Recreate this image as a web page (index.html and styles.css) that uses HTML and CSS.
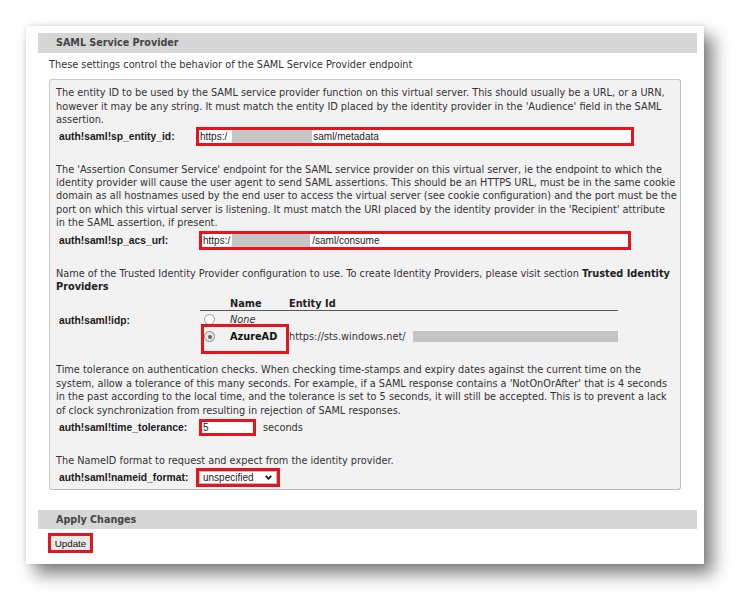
FILE: index.html
```html
<!DOCTYPE html>
<html>
<head>
<meta charset="utf-8">
<title>SAML Service Provider</title>
<link rel="stylesheet" href="styles.css">
</head>
<body>
<div class="page">
  <div class="card">
    <div class="bar">SAML Service Provider</div>
    <p class="intro">These settings control the behavior of the SAML Service Provider endpoint</p>
    <div class="box">
      <p class="desc">The entity ID to be used by the SAML service provider function on this virtual server. This should usually be a URL, or a URN,<br>however it may be any string. It must match the entity ID placed by the identity provider in the 'Audience' field in the SAML<br>assertion.</p>
      <div class="field f-entity">
        <label class="lbl">auth!saml!sp_entity_id:</label>
        <div class="inp inp-entity"><span>https:/</span><span class="redact redact-entity"></span><span>saml/metadata</span></div>
      </div>

      <p class="desc gap">The 'Assertion Consumer Service' endpoint for the SAML service provider on this virtual server, ie the endpoint to which the<br>identity provider will cause the user agent to send SAML assertions. This should be an HTTPS URL, must be in the same cookie<br>domain as all hostnames used by the end user to access the virtual server (see cookie configuration) and the port must be the<br>port on which this virtual server is listening. It must match the URI placed by the identity provider in the 'Recipient' attribute<br>in the SAML assertion, if present.</p>
      <div class="field f-acs">
        <label class="lbl">auth!saml!sp_acs_url:</label>
        <div class="inp inp-acs"><span>https:/</span><span class="redact redact-acs"></span><span>/saml/consume</span></div>
      </div>

      <p class="desc gap">Name of the Trusted Identity Provider configuration to use. To create Identity Providers, please visit section <b>Trusted Identity</b><br><b>Providers</b></p>
      <div class="field f-idp">
        <label class="lbl">auth!saml!idp:</label>
        <div class="idp">
          <div class="idp-row idp-head">
            <span class="c1"></span><span class="c2">Name</span><span class="c3">Entity Id</span>
          </div>
          <div class="idp-row">
            <span class="c1"><span class="radio"></span></span><span class="c2 none">None</span><span class="c3"></span>
          </div>
          <div class="idp-row picked">
            <span class="c1"><span class="radio checked"></span></span><span class="c2 azure">AzureAD</span><span class="c3 ent"><span>https://sts.windows.net/</span><span class="redact redact-idp"></span></span>
          </div>
        </div>
      </div>

      <p class="desc gap2">Time tolerance on authentication checks. When checking time-stamps and expiry dates against the current time on the<br>system, allow a tolerance of this many seconds. For example, if a SAML response contains a 'NotOnOrAfter' that is 4 seconds<br>in the past according to the local time, and the tolerance is set to 5 seconds, it will still be accepted. This is to prevent a lack<br>of clock synchronization from resulting in rejection of SAML responses.</p>
      <div class="field f-time">
        <label class="lbl">auth!saml!time_tolerance:</label>
        <div class="inp inp-time"><span>5</span></div>
        <span class="unit">seconds</span>
      </div>

      <p class="desc gap2">The NameID format to request and expect from the identity provider.</p>
      <div class="field f-nameid">
        <label class="lbl">auth!saml!nameid_format:</label>
        <div class="sel"><span class="sel-inner"><span>unspecified</span><svg class="chev" width="7" height="5" viewBox="0 0 7 5"><polyline points="0.7,0.9 3.5,3.8 6.3,0.9" fill="none" stroke="#111" stroke-width="1.6"/></svg></span></div>
      </div>
    </div>

    <div class="bar bar2">Apply Changes</div>
    <button class="btn" type="button">Update</button>
  </div>
</div>
</body>
</html>
```

FILE: styles.css
```css
* { box-sizing: border-box; }
html, body { margin: 0; padding: 0; background: #fff; }
body {
  font-family: "DejaVu Sans", Verdana, sans-serif;
  font-size: 9.75px;
  color: #333;
}
.page {
  padding: 26px 0 0 26px;
  height: 616px;
  overflow: hidden;
}
.card {
  width: 678px;
  height: 538px;
  background: #fff;
  padding: 7px 7px 0 12px;
  box-shadow: 9px 10px 16px rgba(0, 0, 0, 0.5), 0 0 5px rgba(0, 0, 0, 0.12);
}
.bar {
  height: 20px;
  line-height: 20px;
  background: #d6d6d6;
  padding-left: 18px;
  font-weight: bold;
  font-size: 9.6px;
  color: #444;
}
.bar2 {
  margin-top: 20px;
  height: 19px;
  line-height: 19px;
}
.intro {
  margin: 5px 0 0 11px;
  line-height: 13.4px;
}
.box {
  margin: 8px 16px 0 11px;
  background: #f2f2f2;
  border: 1px solid #cacaca;
  border-right-color: #bdbdbd;
  border-bottom-color: #bdbdbd;
  border-radius: 3px;
  padding: 6px 4px 2px 6px;
  height: 411px;
}
.desc {
  margin: 0;
  line-height: 13.4px;
  white-space: nowrap;
}
.desc b { color: #222; }
.gap { margin-top: 17px; }
.gap2 { margin-top: 18px; }

.field {
  display: flex;
  align-items: center;
}
.lbl {
  flex: none;
  width: 140px;
  padding-left: 3px;
  font-family: "Liberation Sans", Arial, sans-serif;
  font-weight: bold;
  font-size: 10.3px;
  color: #1a1a1a;
}
.f-entity { margin-top: 0; }
.f-acs { margin-top: 1px; }
.f-time { margin-top: 2px; }
.f-nameid { margin-top: 0; }
.f-idp { margin-top: 3px; }

.inp {
  height: 19px;
  border: 3px solid #e3161f;
  background: #fff;
  display: flex;
  align-items: center;
  padding-left: 1px;
  font-family: "Liberation Sans", Arial, sans-serif;
  font-size: 10px;
  color: #222;
}
.inp-entity { width: 438px; }
.inp-acs { width: 432px; margin-left: 3px; }
.inp-time { width: 57px; height: 17px; margin-left: 3px; padding-left: 1px; }
.redact {
  display: inline-block;
  background: #c6c6c6;
}
.redact-entity { width: 80px; height: 13px; margin: 0 1px 0 5px; }
.redact-acs { width: 78px; height: 13px; margin: 0 2px 0 2px; }
.redact-idp { width: 205px; height: 11px; background: #c4c4c4; }
.unit { margin-left: 7px; }

.idp {
  margin-left: 4px;
  width: 418px;
}
.idp-row {
  display: flex;
  align-items: center;
  height: 17px;
  position: relative;
}
.idp-head {
  height: 15px;
  border-bottom: 1px solid #555;
  font-weight: bold;
  color: #222;
}
.c1 { width: 30px; flex: none; display: flex; align-items: center; }
.c2 { width: 59px; flex: none; }
.c3 { flex: 1; display: flex; align-items: center; }
.ent { justify-content: space-between; }
.none { font-style: italic; }
.azure { font-weight: bold; color: #111; }
.radio {
  display: inline-block;
  width: 11px;
  height: 11px;
  margin-left: 4px;
  border-radius: 50%;
  border: 1px solid #9a9a9a;
  background: #fff;
  position: relative;
}
.radio.checked {
  border-color: #8a8a8a;
  background: #e4e4e4;
}
.radio.checked::after {
  content: "";
  position: absolute;
  left: 2.5px;
  top: 2.5px;
  width: 4px;
  height: 4px;
  border-radius: 50%;
  background: #616161;
}
.picked::after {
  content: "";
  position: absolute;
  left: 1px;
  top: -4px;
  width: 82px;
  height: 24px;
  border: 3px solid #e3161f;
  pointer-events: none;
}

.sel {
  width: 84px;
  height: 19px;
  border: 3px solid #e3161f;
  background: #fff;
  display: flex;
}
.sel-inner {
  flex: 1;
  display: flex;
  align-items: center;
  justify-content: space-between;
  border: 1px solid #bbb;
  padding: 0 4px 0 3px;
  font-family: "Liberation Sans", Arial, sans-serif;
  font-size: 10px;
  color: #222;
}
.chev { display: block; }

.btn {
  display: block;
  margin: 4px 0 0 10px;
  height: 20px;
  width: 45px;
  padding: 0;
  border: 3px solid #e3161f;
  background: #e9e9e9;
  font-family: "Liberation Sans", Arial, sans-serif;
  font-size: 9.8px;
  color: #111;
  text-align: center;
}
```
